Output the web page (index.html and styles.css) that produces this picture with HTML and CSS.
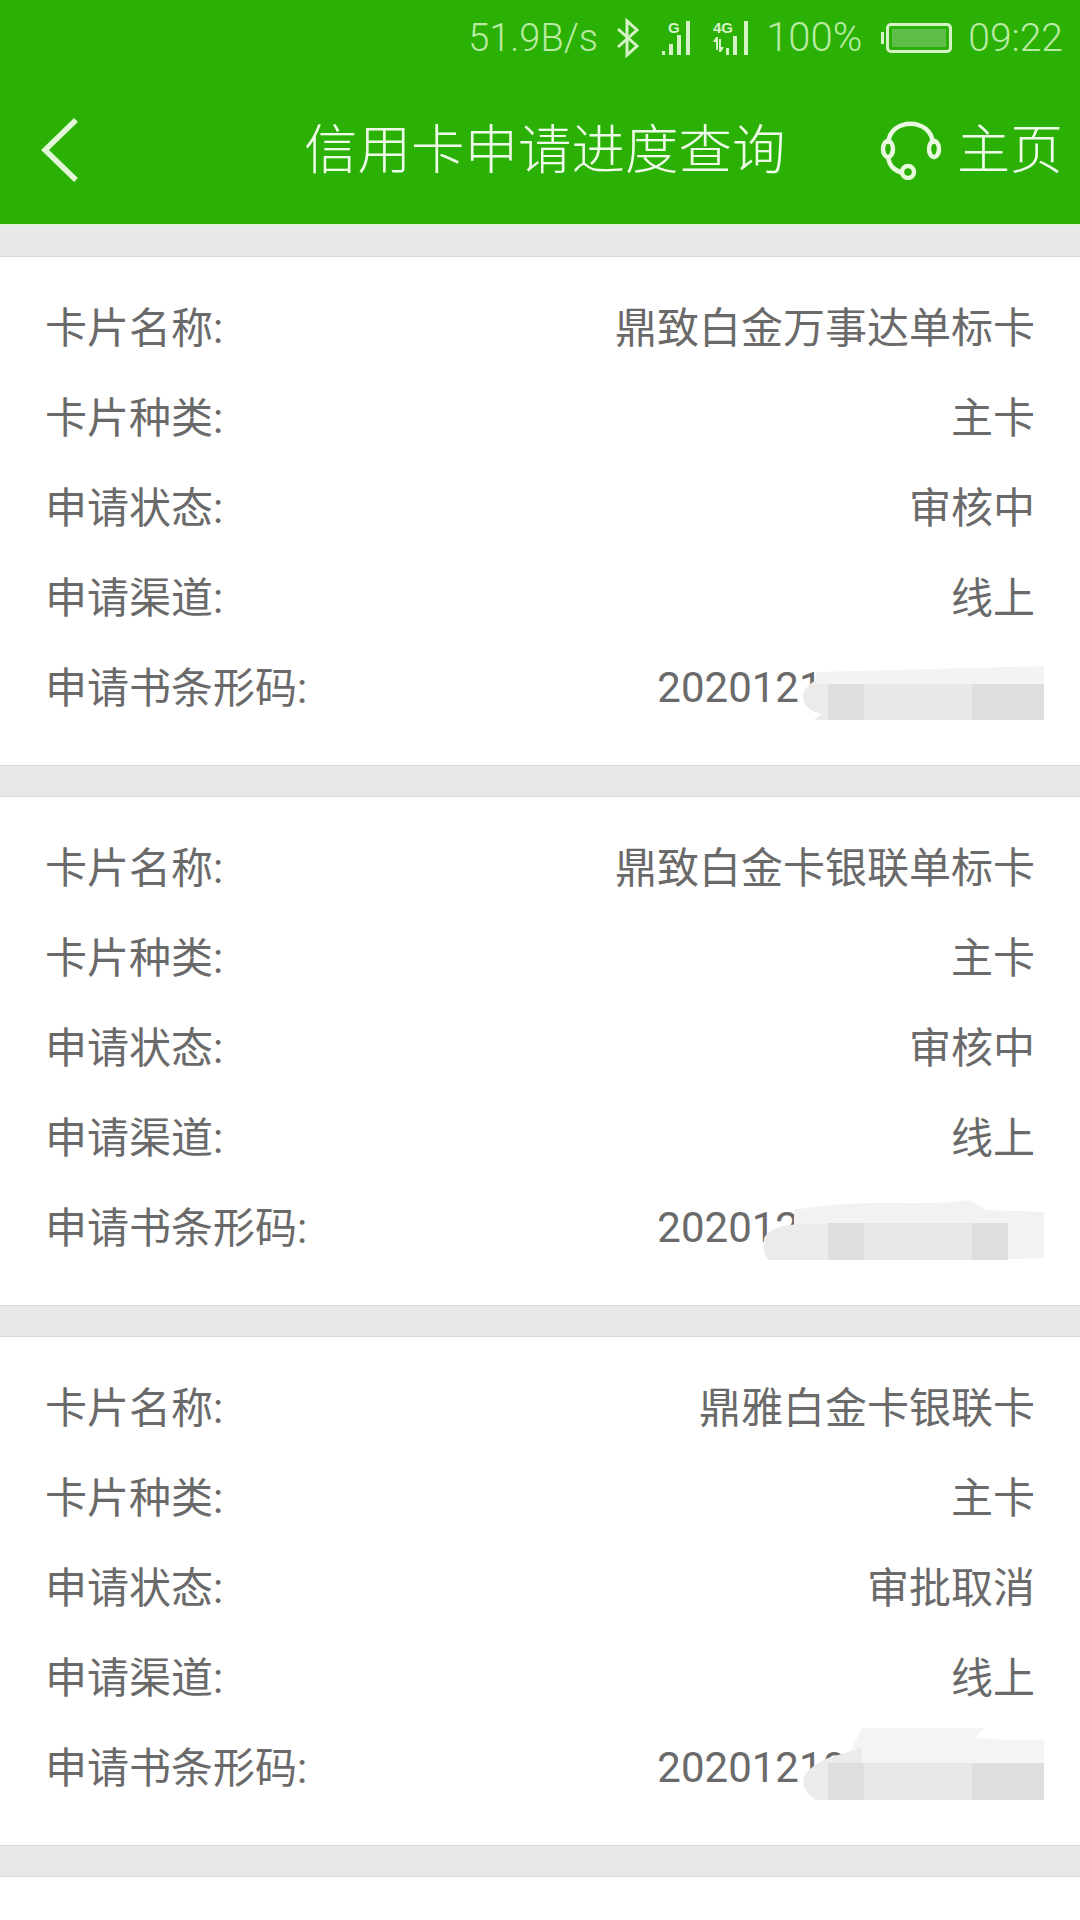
FILE: index.html
```html
<!DOCTYPE html>
<html lang="zh-CN">
<head>
    <meta charset="UTF-8">
    <meta name="viewport" content="width=device-width, initial-scale=1.0">
    <title>信用卡申请进度查询</title>
    <link rel="stylesheet" href="styles.css">
</head>
<body>
    <div class="header">
        <div class="status-bar">
            <span class="speed">51.9B/s</span>
            <svg class="icon-bt" width="26" height="40" viewBox="0 0 24 40">
                <path d="M2 11 L21 28 L11 37 V3 L21 12 L2 29" fill="none" stroke="#d6f3c8" stroke-width="3"/>
            </svg>
            <svg class="icon-g" width="30" height="36" viewBox="0 0 30 36">
                <text x="6" y="13" class="net-text">G</text>
                <rect x="0" y="31" width="3" height="4" />
                <rect x="7" y="24" width="4" height="11" />
                <rect x="15" y="15" width="4" height="20" />
                <rect x="24" y="1" width="4" height="34" />
            </svg>
            <svg class="icon-4g" width="36" height="36" viewBox="0 0 36 36">
                <text x="0" y="13" class="net-text">4G</text>
                <path d="M3 17 L0 22 H3 V30 H5 V17Z M8 32 L11 27 H8 V19 H6 V32Z" />
                <rect x="13" y="28" width="3" height="7" />
                <rect x="20" y="16" width="4" height="19" />
                <rect x="31" y="1" width="4" height="34" />
            </svg>
            <span class="battery-text">100%</span>
            <div class="battery"><div class="battery-level"></div></div>
            <span class="clock">09:22</span>
        </div>
        <div class="nav">
            <svg class="back" width="40" height="66" viewBox="0 0 40 66">
                <path d="M36 3 L5 33 L36 63" fill="none" stroke="#e2f7d8" stroke-width="5.5"/>
            </svg>
            <div class="title">信用卡申请进度查询</div>
            <div class="home">
                <svg width="62" height="60" viewBox="0 0 62 60">
                    <path d="M8 24 C9 -3 52 -3 53 24" fill="none" stroke="#e8f9e0" stroke-width="4.5"/>
                    <path d="M8 36 C9 46 14 50 22 53" fill="none" stroke="#e8f9e0" stroke-width="4.5"/>
                    <ellipse cx="8" cy="29" rx="5" ry="8" fill="none" stroke="#e8f9e0" stroke-width="4.5"/>
                    <ellipse cx="54" cy="29" rx="5" ry="8" fill="none" stroke="#e8f9e0" stroke-width="4.5"/>
                    <circle cx="28" cy="52" r="6" fill="none" stroke="#e8f9e0" stroke-width="4.5"/>
                </svg>
                <span class="home-text">主页</span>
            </div>
        </div>
    </div>

    <div class="card">
        <div class="row"><span>卡片名称:</span><span>鼎致白金万事达单标卡</span></div>
        <div class="row"><span>卡片种类:</span><span>主卡</span></div>
        <div class="row"><span>申请状态:</span><span>审核中</span></div>
        <div class="row"><span>申请渠道:</span><span>线上</span></div>
        <div class="row">
            <span>申请书条形码:</span><span class="code">2020121000000000</span>
            <svg class="mosaic" width="300" height="72" viewBox="0 0 300 72">
                <path d="M84 60 H70 L78 54 Q59 50 59 36 Q60 24 84 14Z" fill="#ebebeb"/>
                <path d="M72 12 L300 6 V24 H72Z" fill="#f3f3f3"/>
                <rect x="84" y="24" width="36" height="36" fill="#dedede"/>
                <rect x="120" y="24" width="108" height="36" fill="#e8e8e8"/>
                <rect x="228" y="24" width="72" height="36" fill="#dedede"/>
            </svg>
        </div>
    </div>

    <div class="card">
        <div class="row"><span>卡片名称:</span><span>鼎致白金卡银联单标卡</span></div>
        <div class="row"><span>卡片种类:</span><span>主卡</span></div>
        <div class="row"><span>申请状态:</span><span>审核中</span></div>
        <div class="row"><span>申请渠道:</span><span>线上</span></div>
        <div class="row">
            <span>申请书条形码:</span><span class="code">2020121000000000</span>
            <svg class="mosaic" width="300" height="72" viewBox="0 0 300 72">
                <path d="M50 10 Q90 2 150 3 Q200 4 226 0 L241 10 L300 12 V58 L240 60 H84 L50 40Z" fill="#f2f2f2"/>
                <path d="M84 60 H24 Q18 52 20 38 Q28 24 60 24 H84Z" fill="#ebebeb"/>
                <rect x="84" y="23" width="36" height="37" fill="#dedede"/>
                <rect x="120" y="23" width="108" height="37" fill="#e8e8e8"/>
                <rect x="228" y="23" width="36" height="37" fill="#dedede"/>
            </svg>
        </div>
    </div>

    <div class="card">
        <div class="row"><span>卡片名称:</span><span>鼎雅白金卡银联卡</span></div>
        <div class="row"><span>卡片种类:</span><span>主卡</span></div>
        <div class="row"><span>申请状态:</span><span>审批取消</span></div>
        <div class="row"><span>申请渠道:</span><span>线上</span></div>
        <div class="row">
            <span>申请书条形码:</span><span class="code">2020121000000000</span>
            <svg class="mosaic" width="300" height="72" viewBox="0 0 300 72">
                <path d="M118 -12 H240 L232 -2 L264 0 H300 V24 H100Z" fill="#f4f4f4"/>
                <path d="M84 60 H72 Q59 52 59 40 Q62 28 84 18 L118 8 V24 H84Z" fill="#ebebeb"/>
                <rect x="84" y="23" width="36" height="37" fill="#dedede"/>
                <rect x="120" y="23" width="108" height="37" fill="#e8e8e8"/>
                <rect x="228" y="23" width="72" height="37" fill="#dedede"/>
            </svg>
        </div>
    </div>

    <div class="card card-last"></div>
</body>
</html>
```

FILE: styles.css
```css
body {
    margin: 0;
    height: 1920px;
    overflow: hidden;
    background-color: #e6e9e8;
    font-family: Roboto, "Noto Sans CJK SC", sans-serif;
}
.header {
    height: 224px;
    background-color: #2bb006;
    border-bottom: 2px solid #e0f3d8;
    margin-bottom: 30px;
}
.status-bar {
    display: flex;
    align-items: center;
    height: 75px;
    padding-right: 17px;
    justify-content: flex-end;
    font-size: 39px;
    font-weight: 300;
    color: #b9eba4;
}
.status-bar svg {
    fill: #d6f3c8;
}
.speed {
    font-size: 38px;
}
.icon-bt {
    margin-left: 17px;
}
.icon-g {
    margin-left: 21px;
}
.icon-4g {
    margin-left: 21px;
}
.net-text {
    font-family: "Liberation Sans", sans-serif;
    font-size: 15px;
    font-weight: 700;
}
.battery-text {
    margin-left: 17px;
    font-size: 40px;
}
.battery {
    box-sizing: border-box;
    width: 66px;
    height: 30px;
    margin-left: 24px;
    padding: 3px;
    border: 3px solid #d6f3c8;
    border-radius: 5px;
    position: relative;
}
.battery::before {
    content: "";
    position: absolute;
    left: -8px;
    top: 6px;
    width: 3px;
    height: 12px;
    background-color: #d6f3c8;
}
.battery-level {
    height: 100%;
    background-color: #5fbd4a;
}
.clock {
    margin-left: 16px;
}
.nav {
    display: flex;
    align-items: center;
    height: 149px;
    padding: 0 17px 0 40px;
    color: #eefbe8;
    font-weight: 300;
}
.title {
    margin-left: 224px;
    margin-bottom: 8px;
    font-size: 53.5px;
}
.home {
    display: flex;
    align-items: center;
    margin-left: auto;
    font-size: 53px;
}
.home svg {
    margin-right: 15px;
}
.home-text {
    margin-bottom: 8px;
}
.card {
    box-sizing: border-box;
    height: 510px;
    margin-bottom: 30px;
    padding: 22px 45px 36px 45px;
    background-color: white;
    border-top: 1px solid #d9dbda;
    border-bottom: 1px solid #d9dbda;
}
.card-last {
    height: 60px;
    margin-bottom: 0;
    padding: 0;
}
.row {
    position: relative;
    display: flex;
    justify-content: space-between;
    align-items: center;
    height: 90px;
    font-size: 42px;
    color: #6a6a6a;
}
.code {
    padding-top: 6px;
}
.mosaic {
    position: absolute;
    right: -9px;
    top: 21px;
    overflow: visible;
}
```
